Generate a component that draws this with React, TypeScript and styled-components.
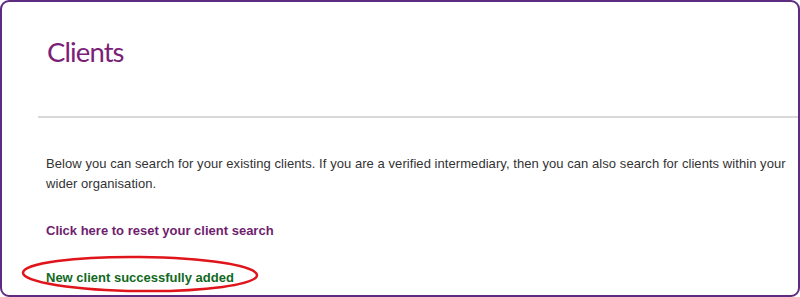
import React from "react";
import styled, { createGlobalStyle } from "styled-components";

const Global = createGlobalStyle`
  html, body { margin: 0; padding: 0; background: #ffffff; }
  body { width: 800px; height: 297px; overflow: hidden; }
`;

const Frame = styled.div`
  box-sizing: border-box;
  width: 800px;
  height: 297px;
  border: 2px solid #5e2b80;
  border-radius: 9px;
  background: #ffffff;
  overflow: hidden;
  display: flex;
  flex-direction: column;
`;

const Header = styled.div`
  padding: 33px 0 0 45px;
  height: 80px;
  box-sizing: border-box;
`;

const Title = styled.h1`
  margin: 0;
  font-family: Lato, "Open Sans", sans-serif;
  font-weight: 400;
  font-size: 27.5px;
  letter-spacing: -0.9px;
  line-height: 34px;
  color: #7c1f78;
`;

const Divider = styled.hr`
  margin: 34px 0 0 36px;
  border: 0;
  height: 2px;
  background: #d9d9d9;
`;

const Body = styled.div`
  padding: 36px 0 0 44px;
  display: flex;
  flex-direction: column;
  font-family: "Liberation Sans", Arial, sans-serif;
`;

const Intro = styled.p`
  margin: 0;
  font-size: 13px;
  letter-spacing: 0.06px;
  line-height: 20px;
  color: #333333;
  padding-right: 6px;
`;

const ResetLink = styled.a`
  display: block;
  margin-top: 27px;
  font-size: 13px;
  font-weight: 700;
  line-height: 20px;
  color: #6f1e6e;
  text-decoration: none;
`;

const StatusWrap = styled.div`
  position: relative;
  margin-top: 27px;
  align-self: flex-start;
`;

const Status = styled.span`
  font-size: 13px;
  font-weight: 700;
  line-height: 20px;
  color: #11691d;
`;

const Annotation = styled.svg`
  position: absolute;
  left: -26px;
  top: -13px;
  width: 242px;
  height: 38px;
  overflow: visible;
  pointer-events: none;
`;

export default function App() {
  return (
    <>
      <Global />
      <Frame>
        <Header>
          <Title>Clients</Title>
        </Header>
        <Divider />
        <Body>
          <Intro>
            Below you can search for your existing clients. If you are a verified intermediary, then you can also search for clients within your wider organisation.
          </Intro>
          <ResetLink href="#">Click here to reset your client search</ResetLink>
          <StatusWrap>
            <Status>New client successfully added</Status>
            <Annotation viewBox="0 0 242 38">
              <ellipse cx="120" cy="19" rx="117" ry="17" fill="none" stroke="#e0141b" strokeWidth="2.5" transform="rotate(0.6 120 19)" />
            </Annotation>
          </StatusWrap>
        </Body>
      </Frame>
    </>
  );
}
